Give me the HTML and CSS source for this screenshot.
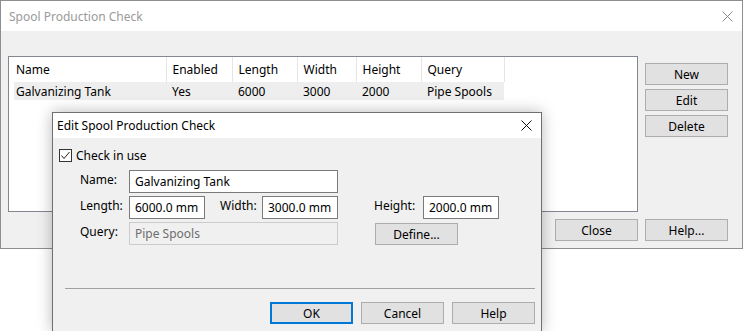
FILE: index.html
```html
<!DOCTYPE html>
<html lang="en">
<head>
    <meta charset="UTF-8">
    <title>Spool Production Check</title>
    <link rel="stylesheet" href="styles.css">
</head>
<body>
    <!-- Main window: list of production checks -->
    <div class="window main-window">
        <div class="titlebar inactive">
            <span>Spool Production Check</span>
            <svg class="close" width="11" height="11" viewBox="0 0 11 11"><path d="M0.5 0.5L10.5 10.5M10.5 0.5L0.5 10.5" stroke="#8a8a8a" stroke-width="1" fill="none"/></svg>
        </div>
        <div class="main-body">
            <div class="listbox">
                <table class="list">
                    <tr class="head">
                        <th class="c-name">Name</th>
                        <th class="c-enabled">Enabled</th>
                        <th class="c-length">Length</th>
                        <th class="c-width">Width</th>
                        <th class="c-height">Height</th>
                        <th class="c-query">Query</th>
                    </tr>
                    <tr class="row selected">
                        <td>Galvanizing Tank</td>
                        <td>Yes</td>
                        <td>6000</td>
                        <td>3000</td>
                        <td>2000</td>
                        <td>Pipe Spools</td>
                    </tr>
                </table>
            </div>
            <div class="side-buttons">
                <button class="btn">New</button>
                <button class="btn">Edit</button>
                <button class="btn">Delete</button>
            </div>
            <div class="bottom-left">
                <button class="btn">Close</button>
            </div>
            <div>
                <button class="btn">Help...</button>
            </div>
        </div>
    </div>

    <!-- Edit dialog on top -->
    <div class="window edit-dialog">
        <div class="titlebar">
            <span>Edit Spool Production Check</span>
            <svg class="close" width="11" height="11" viewBox="0 0 11 11"><path d="M0.5 0.5L10.5 10.5M10.5 0.5L0.5 10.5" stroke="#111" stroke-width="1" fill="none"/></svg>
        </div>
        <div class="dialog-body">
            <label class="check-row">
                <span class="checkbox"><svg width="11" height="11" viewBox="0 0 11 11"><path d="M1.5 5.5L4 8.5L9.5 2" stroke="#222" stroke-width="1" fill="none"/></svg></span>
                Check in use
            </label>
            <div class="fields">
                <div class="lbl first">Name:</div>
                <div class="input wide">Galvanizing Tank</div>

                <div class="lbl first">Length:</div>
                <div class="input">6000.0 mm</div>
                <div class="lbl lbl-width">Width:</div>
                <div class="input">3000.0 mm</div>
                <div class="lbl lbl-height">Height:</div>
                <div class="input">2000.0 mm</div>

                <div class="lbl first">Query:</div>
                <div class="input wide disabled">Pipe Spools</div>
                <button class="btn define">Define...</button>
            </div>
            <div class="footer">
                <div class="separator"></div>
                <div class="footer-buttons">
                    <button class="btn default">OK</button>
                    <button class="btn">Cancel</button>
                    <button class="btn">Help</button>
                </div>
            </div>
        </div>
    </div>
</body>
</html>
```

FILE: styles.css
```css
/* Page acts as the desktop */
body {
    margin: 0;
    width: 743px;
    height: 331px;
    overflow: hidden;
    position: relative;
    background: #ffffff;
    font-family: "Noto Sans", "Open Sans", sans-serif;
    font-size: 12px;
    color: #000;
}

/* Shared window chrome */
.window {
    position: absolute;
    box-sizing: border-box;
    display: flex;
    flex-direction: column;
    background: #f0f0f0;
}
.titlebar {
    background: #fff;
    display: flex;
    align-items: center;
    justify-content: space-between;
    flex-shrink: 0;
}
.titlebar.inactive {
    color: #9a9a9a;
}

/* Main window */
.main-window {
    left: 0;
    top: 0;
    width: 743px;
    height: 249px;
    border: 1px solid #8e8e8e;
}
.main-window .titlebar {
    height: 30px;
    padding: 0 9px 0 8px;
}
.main-window .close {
    margin-top: 1px;
}
.main-body {
    flex: 1;
    padding: 25px 0 0 7px;
    display: grid;
    grid-template-columns: 630px 83px;
    grid-template-rows: 156px 22px;
    column-gap: 7px;
    row-gap: 7px;
}
.listbox {
    box-sizing: border-box;
    background: #fff;
    border: 1px solid #828790;
    padding-left: 5px;
}
.list {
    border-collapse: collapse;
    table-layout: fixed;
}
.list th {
    font-weight: normal;
    text-align: left;
    height: 25px;
    padding: 0 0 0 6px;
    border-right: 1px solid #e5e5e5;
    box-sizing: border-box;
}
.list td {
    height: 18px;
    padding: 0 0 0 6px;
    white-space: nowrap;
}
.list th:first-child,
.list td:first-child {
    padding-left: 2px;
}
.row.selected td {
    background: #eeeeee;
}
.c-name { width: 152px; }
.c-enabled { width: 66px; }
.c-length { width: 65px; }
.c-width { width: 59px; }
.c-height { width: 65px; }
.c-query { width: 83px; }

.side-buttons {
    padding-top: 7px;
    display: flex;
    flex-direction: column;
    gap: 4px;
}
.bottom-left {
    display: flex;
    justify-content: flex-end;
}

/* Buttons */
.btn {
    box-sizing: border-box;
    width: 83px;
    height: 22px;
    padding: 0;
    margin: 0;
    font: inherit;
    color: #000;
    background: #e1e1e1;
    border: 1px solid #adadad;
}
.btn.default {
    border: 2px solid #0078d7;
}

/* Edit dialog */
.edit-dialog {
    left: 52px;
    top: 112px;
    width: 490px;
    height: 220px;
    border: 1px solid #6f6f6f;
    box-shadow: 0 0 14px rgba(0, 0, 0, 0.28);
}
.edit-dialog .titlebar {
    height: 25px;
    padding: 0 9px 0 4px;
}
.dialog-body {
    flex: 1;
    display: flex;
    flex-direction: column;
    padding: 11px 0 7px 6px;
}
.check-row {
    display: flex;
    align-items: center;
    gap: 4px;
    height: 13px;
}
.checkbox {
    box-sizing: border-box;
    width: 13px;
    height: 13px;
    border: 1px solid #333;
    background: #fff;
    display: flex;
}

/* Field grid: label, input, label, input, gap, label, input */
.fields {
    margin: 8px 0 0 21px;
    display: grid;
    grid-template-columns: 49px 76px 57px 76px 36px 49px 76px;
    grid-template-rows: 23px 23px 23px;
    row-gap: 3px;
}
.lbl {
    padding-top: 1px;
}
.lbl.first {
    grid-column: 1;
}
.lbl-width {
    padding-left: 15px;
}
.lbl-height {
    grid-column: 6;
}
.input {
    box-sizing: border-box;
    height: 23px;
    border: 1px solid #7a7a7a;
    background: #fff;
    padding: 0 5px;
    display: flex;
    align-items: center;
    white-space: nowrap;
}
.input.wide {
    grid-column: 2 / 5;
}
.input.disabled {
    background: #f0f0f0;
    border-color: #cccccc;
    color: #6d6d6d;
}
.define {
    grid-column: 6 / 8;
    margin-top: 1px;
    margin-left: 1px;
}

.footer {
    margin-top: auto;
}
.separator {
    margin: 0 6px 0 6px;
    border-top: 1px solid #a0a0a0;
}
.footer-buttons {
    margin-top: 13px;
    padding-right: 6px;
    display: flex;
    justify-content: flex-end;
    gap: 8px;
}
```
